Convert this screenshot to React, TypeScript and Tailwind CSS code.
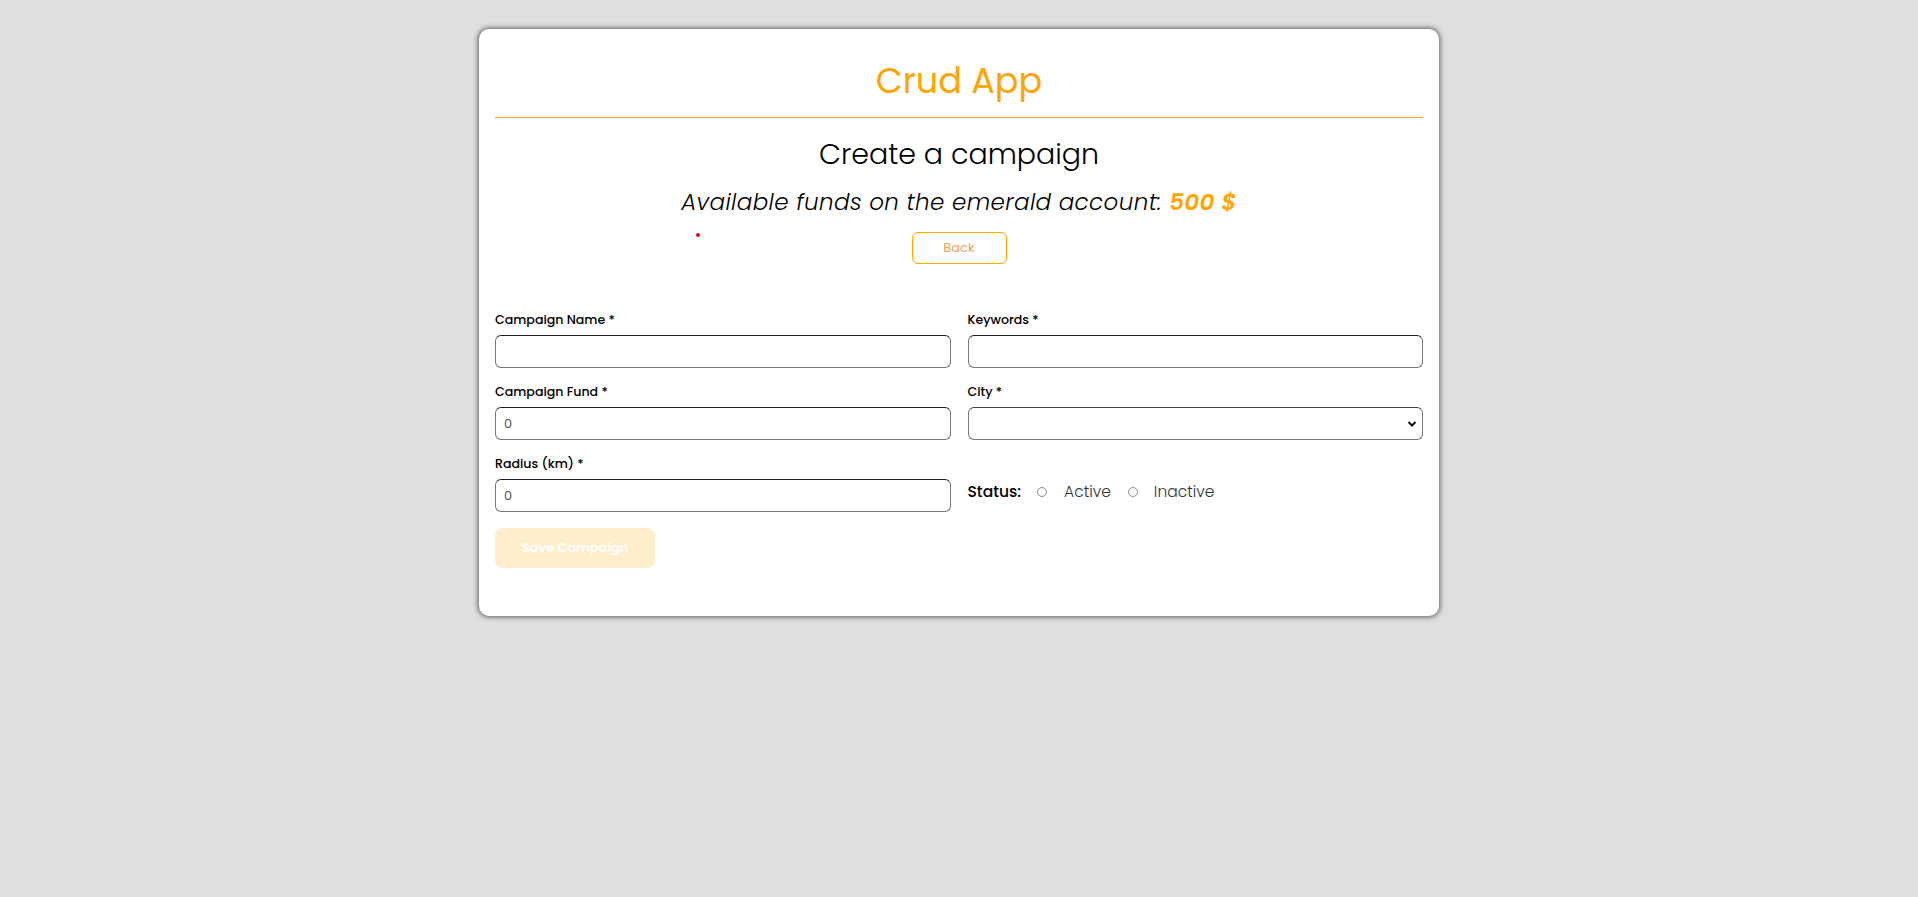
import React from "react";

const font = { fontFamily: "Poppins, 'Open Sans', 'Noto Sans', sans-serif" };

function Field({ label, value, select }: { label: string; value?: string; select?: boolean }) {
  return (
    <div className="mb-[14px]">
      <label className="block h-5 text-[12.6px] leading-5 font-medium text-black">{label}</label>
      {select ? (
        <div className="relative mt-[5px] h-[33px] rounded-md border border-[#777] border-t-[#444] bg-white">
          <svg className="absolute right-[5px] top-[12px]" width="10" height="8" viewBox="0 0 10 8">
            <path d="M1.5 2 L5 5.5 L8.5 2" fill="none" stroke="#111" strokeWidth="2" />
          </svg>
        </div>
      ) : (
        <div className="mt-[5px] flex h-[33px] items-center rounded-md border border-[#777] border-t-[#222] bg-white px-[8px] text-[13px] text-[#555]">
          {value}
        </div>
      )}
    </div>
  );
}

export default function App() {
  return (
    <div className="min-h-[897px] w-full bg-[#dfdfdf] pt-[29px]" style={font}>
      <div className="mx-auto w-[960px] rounded-[10px] bg-white px-4 pb-12 shadow-[0_0_5px_1px_rgba(60,60,60,0.8)]">
        <h1 className="pt-[28px] text-center text-[35px] leading-[48px] font-normal text-[#ffa500]">Crud App</h1>
        <div className="mt-3 h-px bg-[#f2a72e]" />

        <h2 className="mt-4 text-center text-[28.5px] leading-10 font-light text-black">Create a campaign</h2>
        <p className="mt-3 text-center text-[23px] leading-8 font-light italic tracking-[0.4px] text-black">
          Available funds on the emerald account:{" "}
          <span className="font-semibold text-[#ffa500]">500 $</span>
        </p>

        <div className="relative mt-[14px] flex justify-center">
          <span className="absolute left-[201px] top-[1px] h-1 w-1 rounded-full bg-[#d11]" />
          <button className="h-8 w-[95px] rounded-md border border-[#ffa500] bg-white text-[13px] text-[#f4a05a]">
            Back
          </button>
        </div>

        <div className="mt-[46px] grid grid-cols-2 gap-x-[17px]">
          <Field label="Campaign Name *" />
          <Field label="Keywords *" />
          <Field label="Campaign Fund *" value="0" />
          <Field label="City *" select />
          <Field label="Radius (km) *" value="0" />
          <div className="mt-[25px] flex h-[26px] items-center">
            <span className="text-[15.5px] font-medium text-black">Status:</span>
            <span className="ml-4 h-[10px] w-[10px] rounded-full border border-[#8d8d8d]" />
            <span className="ml-[17px] text-[15.5px] font-light text-[#333]">Active</span>
            <span className="ml-[17px] h-[10px] w-[10px] rounded-full border border-[#8d8d8d]" />
            <span className="ml-4 text-[15.5px] font-light text-[#333]">Inactive</span>
          </div>
        </div>

        <button className="mt-[2px] h-10 w-[160px] rounded-lg bg-[#ffedcc] text-[13px] font-semibold text-white">
          Save Campaign
        </button>
      </div>
    </div>
  );
}
